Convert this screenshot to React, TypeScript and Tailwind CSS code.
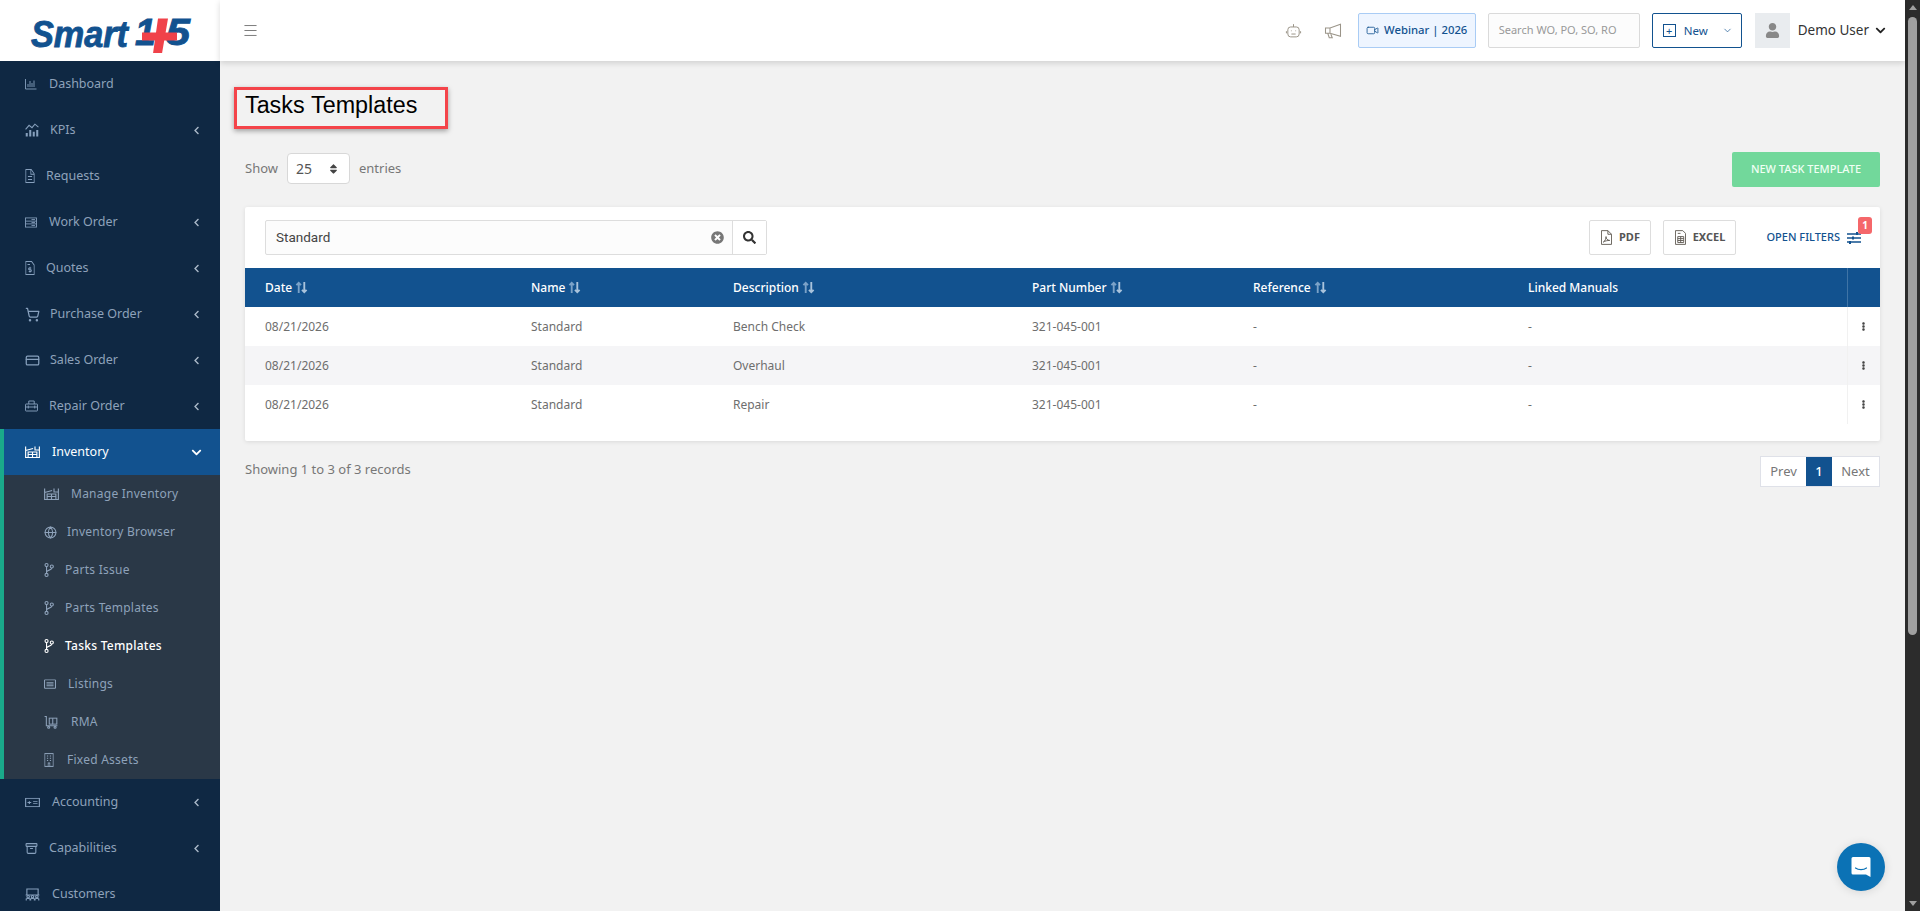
import type { ReactNode } from "react";
import { Archive, ChevronDown, CreditCard, Globe, Menu, ShoppingCart, Video } from "lucide-react";
import { FaChevronDown, FaChevronLeft, FaEllipsisV, FaSearch, FaSort, FaTimesCircle, FaUser } from "react-icons/fa";

const FONT = { fontFamily: '"Noto Sans", sans-serif' };

function Line({ children, className }: { children: ReactNode; className?: string }) {
  return (
    <svg viewBox="0 0 24 24" fill="none" stroke="currentColor" strokeWidth="1.8" preserveAspectRatio="none" className={className}>
      {children}
    </svg>
  );
}

type IconProps = { className?: string };

const DashIcon = (p: IconProps) => (
  <Line {...p}><path d="M1 2v20h22M6 18v-6M10 18V6M14 18v-8M18 18V5" /></Line>
);
const KpiIcon = (p: IconProps) => (
  <Line {...p}><path d="M1 11l6-7 5 4 5-6 6 5" /><path strokeWidth="3.5" d="M3 23v-6M9 23V12M15 23v-8M21 23V12" /></Line>
);
const ReqIcon = (p: IconProps) => (
  <Line {...p}><path d="M2 1h13l7 7v15H2z" /><path d="M14 1v8h8M7 13h10M7 18h10" /></Line>
);
const WorkIcon = (p: IconProps) => (
  <Line {...p}><rect x="1" y="2" width="22" height="20" /><path d="M1 9h22M1 15h22M13 5.5h7M13 12h7M13 18.5h7" /></Line>
);
const QuoteIcon = (p: IconProps) => (
  <Line {...p}><path d="M2 1h14l6 6v16H2z" /><path d="M6 6h6M12 10v10M15 12h-4.500a2 1.500 0 000 3h3a2 1.500 0 010 3H9" /></Line>
);
const RepairIcon = (p: IconProps) => (
  <Line {...p}><rect x="1" y="8" width="22" height="14" rx="1" /><path d="M7 8V2h10v6M1 14h22M6 11v6M18 11v6" /></Line>
);
const StockIcon = (p: IconProps) => (
  <Line {...p}><path d="M1 1v22h22V1M1 9l12-4M23 8h-7V1M5 23V12h14v11M12 12v11M5 17h14" /></Line>
);
const BranchIcon = (p: IconProps) => (
  <svg viewBox="0 0 14 20" fill="none" stroke="currentColor" strokeWidth="1.6" className={p.className}>
    <circle cx="3.500" cy="3" r="2.200" />
    <circle cx="3.500" cy="17" r="2.200" />
    <circle cx="11" cy="5" r="2.200" />
    <path d="M3.500 5.200v9.600M11 7.200c0 3.500-7.500 2.500-7.500 6" />
  </svg>
);
const ListIcon = (p: IconProps) => (
  <Line {...p}><rect x="1" y="2" width="22" height="20" rx="1" strokeWidth="2.200" /><path strokeWidth="2.200" d="M5 8h14M5 12h14M5 16h14" /></Line>
);
const RmaIcon = (p: IconProps) => (
  <Line {...p}><path d="M1 1h3v17h19" /><rect x="9" y="4" width="13" height="11" /><path d="M15 4v11" /><circle cx="8" cy="21" r="1.800" /><circle cx="19" cy="21" r="1.800" /></Line>
);
const AssetIcon = (p: IconProps) => (
  <Line {...p}><rect x="2" y="1" width="20" height="22" /><path d="M7 5h3M14 5h3M7 9h3M14 9h3M7 13h3M14 13h3M10 23v-6h4v6" /></Line>
);
const AccountIcon = (p: IconProps) => (
  <Line {...p}><rect x="1" y="3" width="22" height="18" /><path d="M13 10h7M13 14h7M4 12h6M7 9v6" /></Line>
);
const CrewIcon = (p: IconProps) => (
  <Line {...p}><path d="M3 12V2h18v10M1 13h22" /><circle cx="5" cy="16" r="2" /><circle cx="12" cy="16" r="2" /><circle cx="19" cy="16" r="2" /><path d="M2 23v-3l3-1 3 1v3M9 23v-3l3-1 3 1v3M16 23v-3l3-1 3 1v3" /></Line>
);
const PdfIcon = (p: IconProps) => (
  <svg viewBox="0 0 12 16" fill="none" stroke="#5f5a52" strokeWidth="1" className={p.className}>
    <path d="M.5.500h7l4 4v11H.500z" />
    <path d="M7.500.500v4h4M2.500 13c2-1 3-4 3-6 0 2.500 1.500 4 4 4.200-2.500 0-5 .5-7 1.800z" />
  </svg>
);
const SheetIcon = (p: IconProps) => (
  <svg viewBox="0 0 12 16" fill="none" stroke="#5f5a52" strokeWidth="1" className={p.className}>
    <path d="M.5.500h8l3 3v12H.500z" />
    <path d="M3 3.500h3M3 7h6.500v6.500H3zM3 9.200h6.500M3 11.300h6.500M6.200 7v6.500" />
  </svg>
);

type Item = {
  label: string;
  icon: (p: IconProps) => ReactNode;
  iconClass: string;
  box: string;
  caret?: boolean;
};

const TOP: Item[] = [
  { label: "Dashboard", icon: DashIcon, iconClass: "w-[12px] h-[12px]", box: "w-[24px]" },
  { label: "KPIs", icon: KpiIcon, iconClass: "w-[14px] h-[14px]", box: "w-[25px]", caret: true },
  { label: "Requests", icon: ReqIcon, iconClass: "w-[10px] h-[14px]", box: "w-[21px]" },
  { label: "Work Order", icon: WorkIcon, iconClass: "w-[12px] h-[11px]", box: "w-[24px]", caret: true },
  { label: "Quotes", icon: QuoteIcon, iconClass: "w-[10px] h-[14px]", box: "w-[21px]", caret: true },
  { label: "Purchase Order", icon: ShoppingCart, iconClass: "w-[15px] h-[15px]", box: "w-[25px]", caret: true },
  { label: "Sales Order", icon: CreditCard, iconClass: "w-[15px] h-[15px]", box: "w-[25px]", caret: true },
  { label: "Repair Order", icon: RepairIcon, iconClass: "w-[13px] h-[12px]", box: "w-[24px]", caret: true },
];

const SUB: (Item & { active?: boolean })[] = [
  { label: "Manage Inventory", icon: StockIcon, iconClass: "w-[15px] h-[12px]", box: "w-[27px]" },
  { label: "Inventory Browser", icon: Globe, iconClass: "w-[13px] h-[13px]", box: "w-[23px]" },
  { label: "Parts Issue", icon: BranchIcon, iconClass: "w-[10px] h-[14px]", box: "w-[21px]" },
  { label: "Parts Templates", icon: BranchIcon, iconClass: "w-[10px] h-[14px]", box: "w-[21px]" },
  { label: "Tasks Templates", icon: BranchIcon, iconClass: "w-[10px] h-[14px]", box: "w-[21px]", active: true },
  { label: "Listings", icon: ListIcon, iconClass: "w-[12px] h-[10px]", box: "w-[24px]" },
  { label: "RMA", icon: RmaIcon, iconClass: "w-[14px] h-[13px]", box: "w-[27px]" },
  { label: "Fixed Assets", icon: AssetIcon, iconClass: "w-[10px] h-[14px]", box: "w-[23px]" },
];

const BOTTOM: Item[] = [
  { label: "Accounting", icon: AccountIcon, iconClass: "w-[15px] h-[11px]", box: "w-[27px]", caret: true },
  { label: "Capabilities", icon: Archive, iconClass: "w-[13px] h-[13px]", box: "w-[24px]", caret: true },
  { label: "Customers", icon: CrewIcon, iconClass: "w-[15px] h-[13px]", box: "w-[27px]" },
];

function NavRow({ item }: { item: Item }) {
  const Icon = item.icon;
  return (
    <div className="flex h-[46px] shrink-0 items-center pl-[25px] pr-[19px] text-[12.5px] text-[#8ea2ba]">
      <span className={`${item.box} flex shrink-0 items-center text-[#87a0bd]`}>
        <Icon className={item.iconClass} />
      </span>
      <span className="flex-1">{item.label}</span>
      {item.caret && <FaChevronLeft className="h-[9px] w-[9px] text-[#aab8c8]" />}
    </div>
  );
}

function Sidebar() {
  return (
    <aside className="flex h-full w-[220px] shrink-0 flex-col overflow-hidden bg-[#0f2843]">
      <div className="flex h-[61px] shrink-0 items-center bg-white pl-[25px]">
        <svg viewBox="0 0 170 44" className="h-[44px] w-[170px]">
          <g fontFamily="Liberation Sans" fontWeight="700" fontStyle="italic" fontSize="37" fill="#12528f" stroke="#12528f" strokeWidth="0.9">
            <text x="6" y="38" textLength="97" lengthAdjust="spacingAndGlyphs">Smart</text>
            <text x="110" y="36">1</text>
            <text x="141" y="36" textLength="24" lengthAdjust="spacingAndGlyphs">5</text>
          </g>
          <path d="M117 23.500h35v8h-35zM133 9.500h10l-6 35h-9z" fill="#f0424a" />
        </svg>
      </div>
      {TOP.map((item) => (
        <NavRow key={item.label} item={item} />
      ))}
      <div className="shrink-0 border-l-4 border-[#1aa98a]">
        <div className="flex h-[46px] items-center bg-[#12528f] pl-[21px] pr-[18px] text-[12.5px] text-white">
          <span className="flex w-[27px] shrink-0 items-center">
            <StockIcon className="h-[12px] w-[15px]" />
          </span>
          <span className="flex-1">Inventory</span>
          <FaChevronDown className="h-[11px] w-[11px]" />
        </div>
        <div className="bg-[#2a3847]">
          {SUB.map((item) => {
            const Icon = item.icon;
            return (
              <div
                key={item.label}
                className={`flex h-[38px] items-center pl-[40px] text-[12px] tracking-[0.25px] ${item.active ? "font-medium text-white" : "text-[#8ea2ba]"}`}
              >
                <span className={`${item.box} flex shrink-0 items-center`}>
                  <Icon className={item.iconClass} />
                </span>
                <span>{item.label}</span>
              </div>
            );
          })}
        </div>
      </div>
      {BOTTOM.map((item) => (
        <NavRow key={item.label} item={item} />
      ))}
    </aside>
  );
}

function Topbar() {
  return (
    <header className="relative z-10 flex h-[61px] shrink-0 items-center bg-white pl-[22px] pr-[19px] shadow-[0_2px_6px_rgba(0,0,0,0.15)]">
      <Menu className="h-[17px] w-[17px] text-[#666]" strokeWidth={1.2} />
      <div className="ml-auto flex items-center">
        <svg viewBox="0 0 24 24" fill="none" stroke="#9a9488" strokeWidth="1.4" className="h-[17px] w-[17px]">
          <rect x="4" y="7" width="16" height="14" rx="4" />
          <path d="M12 7V3M2 13v3M22 13v3M9 12v1M15 12v1M9 17h6" />
        </svg>
        <svg viewBox="0 0 24 24" fill="none" stroke="#9a9488" strokeWidth="1.4" className="ml-[22px] h-[18px] w-[18px]">
          <path d="M22 3v16L8 15H2V8h6zM8 8v7M5 15l2 6h4l-2-5" />
        </svg>
        <div className="ml-[16px] flex h-[35px] w-[118px] items-center justify-center gap-[5px] rounded-[2px] border border-[#a9ccf5] bg-[#eef5ff] text-[11.3px] font-medium text-[#12528f]">
          <Video className="h-[13px] w-[13px]" strokeWidth={1.5} />
          Webinar | 2026
        </div>
        <div className="ml-[12px] flex h-[35px] w-[152px] items-center rounded-[2px] border border-[#dadada] bg-[#fcfcfc] pl-[10px] text-[11px] text-[#999]">
          Search WO, PO, SO, RO
        </div>
        <div className="ml-[12px] flex h-[35px] w-[90px] items-center rounded-[2px] border border-[#12528f] pl-[10px] text-[11.5px] text-[#12528f]">
          <span className="flex h-[13px] w-[13px] items-center justify-center border border-[#12528f] text-[11px] leading-none">+</span>
          <span className="ml-[8px]">New</span>
          <ChevronDown className="ml-[14px] h-[11px] w-[11px]" strokeWidth={1.5} />
        </div>
        <div className="ml-[13px] flex h-[35px] w-[35px] items-center justify-center bg-[#e9ecef]">
          <FaUser className="h-[15px] w-[15px] text-[#888]" />
        </div>
        <span className="ml-[8px] text-[13.5px] text-[#333]">Demo User</span>
        <FaChevronDown className="ml-[6px] h-[11px] w-[11px] text-[#222]" />
      </div>
    </header>
  );
}

const COLS = ["w-[266px]", "w-[202px]", "w-[299px]", "w-[221px]", "w-[275px]", "w-[339px]", "w-[33px]"];
const HEAD = ["Date", "Name", "Description", "Part Number", "Reference", "Linked Manuals"];
const ROWS = [
  ["08/21/2026", "Standard", "Bench Check", "321-045-001", "-", "-"],
  ["08/21/2026", "Standard", "Overhaul", "321-045-001", "-", "-"],
  ["08/21/2026", "Standard", "Repair", "321-045-001", "-", "-"],
];

function SortIcon() {
  return (
    <svg viewBox="0 0 14 14" fill="none" strokeWidth="2" className="ml-[3px] h-[13px] w-[13px]">
      <path d="M4 13V2M1.500 4.500L4 2l2.500 2.500" stroke="#7ba2c8" />
      <path d="M10 1v11M7.500 9.500L10 12l2.500-2.500" stroke="#a9c3dc" />
    </svg>
  );
}

function TaskTable() {
  return (
    <table className="w-full table-fixed border-collapse text-[12px]">
      <colgroup>
        {COLS.map((c) => (
          <col key={c} className={c} />
        ))}
      </colgroup>
      <thead>
        <tr className="h-[39px] bg-[#12528f] text-white">
          {HEAD.map((h) => (
            <th key={h} className="pl-[20px] text-left text-[12px] font-medium">
              <span className="inline-flex items-center">
                {h}
                {h !== "Linked Manuals" && <SortIcon />}
              </span>
            </th>
          ))}
          <th className="border-l border-[#3f74a6]" />
        </tr>
      </thead>
      <tbody>
        {ROWS.map((row, i) => (
          <tr key={row[2]} className={`h-[39px] text-[#6e6e6e] ${i === 1 ? "bg-[#f5f5f7]" : "bg-white"}`}>
            {row.map((cell, j) => (
              <td key={j} className="pl-[20px]">
                {cell}
              </td>
            ))}
            <td className="border-l border-[#f1f1f1]">
              <FaEllipsisV className="mx-auto h-[9px] w-[9px] text-[#444]" />
            </td>
          </tr>
        ))}
      </tbody>
    </table>
  );
}

function Content() {
  return (
    <main className="flex-1 overflow-hidden bg-[#f2f2f2] px-[25px] pt-[26px]">
      <div className="-ml-[11px] flex h-[42px] w-[214px] border-[3px] border-[#f4444a] pl-[8px] shadow-[0_2px_5px_rgba(0,0,0,0.35)]">
        <h1 className="text-[23.3px] leading-[30px] text-black [font-family:'Liberation_Sans',sans-serif] [word-spacing:0.5px]">
          Tasks Templates
        </h1>
      </div>

      <div className="mt-[23px] flex h-[35px] items-start text-[13px] text-[#777]">
        <span className="mt-[7px]">Show</span>
        <div className="ml-[9px] mt-[1px] flex h-[31px] w-[63px] items-center justify-between rounded-[4px] border border-[#d8d8d8] bg-white pl-[8px] pr-[11px] text-[14px] text-[#555]">
          25
          <FaSort className="h-[12px] w-[9px] text-[#444]" />
        </div>
        <span className="ml-[9px] mt-[7px]">entries</span>
        <button className="ml-auto h-[35px] w-[148px] rounded-[2px] bg-[#72d89b] text-[11px] font-medium text-[#f0fff4]">
          NEW TASK TEMPLATE
        </button>
      </div>

      <section className="mt-[20px] h-[234px] rounded-[2px] bg-white shadow-[0_1px_4px_rgba(0,0,0,0.1)]">
        <div className="flex h-[61px] items-start pl-[20px] pr-[19px] pt-[13px]">
          <div className="flex h-[35px] w-[502px] rounded-[2px] border border-[#dddddd] bg-[#fcfcfc]">
            <span className="flex flex-1 items-center pl-[10px] text-[13.5px] text-[#444] [font-family:Roboto,sans-serif]">Standard</span>
            <span className="flex items-center pr-[8px]">
              <FaTimesCircle className="h-[13px] w-[13px] text-[#777]" />
            </span>
            <span className="flex w-[34px] items-center justify-center border-l border-[#dddddd] bg-white">
              <FaSearch className="h-[13px] w-[13px] text-[#333]" />
            </span>
          </div>
          <div className="ml-auto flex items-center">
            <div className="flex h-[35px] w-[62px] items-center justify-center gap-[7px] rounded-[2px] border border-[#dddddd] text-[11px] font-bold text-[#555]">
              <PdfIcon className="h-[15px] w-[11px]" />
              PDF
            </div>
            <div className="ml-[12px] flex h-[35px] w-[73px] items-center justify-center gap-[7px] rounded-[2px] border border-[#dddddd] text-[11px] font-bold text-[#555]">
              <SheetIcon className="h-[15px] w-[11px]" />
              EXCEL
            </div>
            <span className="ml-[30px] text-[11px] font-medium text-[#12528f]">OPEN FILTERS</span>
            <div className="relative ml-[7px]">
              <svg viewBox="0 0 14 12" fill="none" stroke="#12528f" strokeWidth="1.3" className="h-[12px] w-[14px]">
                <path d="M0 2h14M0 6h14M0 10h14" />
                <path strokeWidth="2" d="M10 0v3M6 4.500v3M3 9v3" />
              </svg>
              <span className="absolute -right-[11px] -top-[15px] flex h-[17px] w-[14px] items-center justify-center rounded-[3px] bg-[#f5676a] text-[10px] font-bold text-white">
                1
              </span>
            </div>
          </div>
        </div>
        <TaskTable />
      </section>

      <div className="mt-[15px] flex items-start justify-between">
        <span className="mt-[4px] text-[13px] text-[#777]">Showing 1 to 3 of 3 records</span>
        <div className="flex h-[31px] border border-[#dfe1e8] bg-white text-[13px] text-[#777]">
          <span className="flex w-[45px] items-center justify-center">Prev</span>
          <span className="flex w-[26px] items-center justify-center bg-[#12528f] font-medium text-white">1</span>
          <span className="flex w-[47px] items-center justify-center">Next</span>
        </div>
      </div>
    </main>
  );
}

function Scrollbar() {
  return (
    <div className="flex h-full w-[15px] shrink-0 flex-col items-center bg-[#2c2c2c]">
      <span className="mt-[5px] h-0 w-0 border-x-[4.5px] border-b-[5px] border-x-transparent border-b-[#a0a0a0]" />
      <span className="mt-[7px] h-[618px] w-[9px] rounded-[5px] bg-[#a0a0a0]" />
      <span className="mb-[5px] mt-auto h-0 w-0 border-x-[4.5px] border-t-[5px] border-x-transparent border-t-[#a0a0a0]" />
    </div>
  );
}

export default function App() {
  return (
    <div style={FONT} className="relative flex h-[911px] w-full overflow-hidden bg-[#f2f2f2]">
      <Sidebar />
      <div className="flex min-w-0 flex-1 flex-col">
        <Topbar />
        <Content />
      </div>
      <Scrollbar />
      <div className="absolute bottom-[20px] right-[35px] flex h-[48px] w-[48px] items-center justify-center rounded-full bg-[#0b72b5] shadow-[0_1px_10px_rgba(0,0,0,0.12)]">
        <svg viewBox="0 0 24 24" className="h-[24px] w-[24px]">
          <path d="M4 2h16a1.500 1.500 0 011.500 1.500V22L17 19.500H4A1.500 1.500 0 012.500 18V3.500A1.500 1.500 0 014 2z" fill="#fff" />
          <path d="M6.500 13c3 2.200 8 2.200 11 0" fill="none" stroke="#0b72b5" strokeWidth="1.2" strokeLinecap="round" />
        </svg>
      </div>
    </div>
  );
}
